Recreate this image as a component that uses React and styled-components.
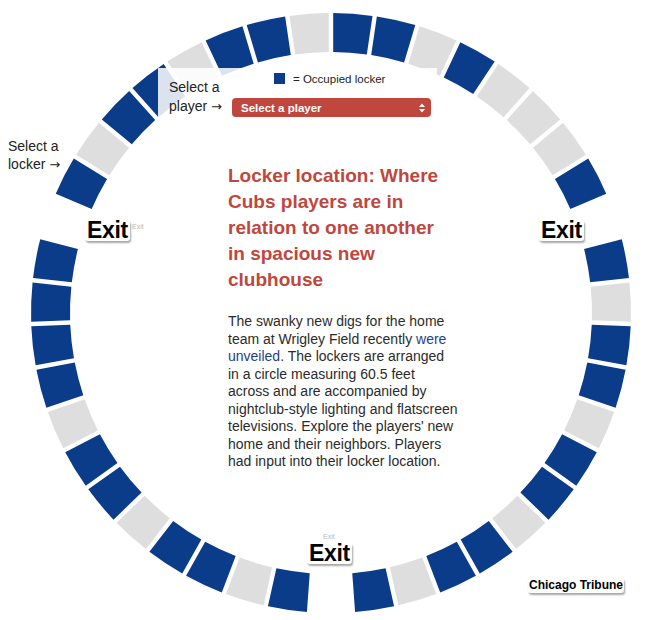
import React from "react";
import styled, { createGlobalStyle } from "styled-components";

const BLUE = "#0b3c8a";
const GREY = "#dedede";
const RED = "#bf473d";

const GlobalStyle = createGlobalStyle`
  html, body { margin: 0; padding: 0; background: #fff; }
  body {
    font-family: "Liberation Sans", Arial, Helvetica, sans-serif;
    color: #333;
  }
`;

// Locker slots clockwise from 12 o'clock. B = occupied, G = empty, X = exit opening.
const SLOTS =
  "BBGBGGGB" + "X" + "BGBBGBBGBBGB" + "X" + "BGBBGBBGBBBB" + "X" + "BGBBGBBG";

const CX = 331;
const CY = 313;
const R_OUT = 300;
const R_IN = 261;
const HALF_GAP = 2.2;
const STEP = (Math.PI * 2) / SLOTS.length;

function sectorPath(i) {
  const a0 = i * STEP;
  const a1 = (i + 1) * STEP;
  const pt = (r, a) =>
    `${(CX + r * Math.sin(a)).toFixed(2)} ${(CY - r * Math.cos(a)).toFixed(2)}`;
  const go = HALF_GAP / R_OUT;
  const gi = HALF_GAP / R_IN;
  return (
    `M${pt(R_OUT, a0 + go)} A${R_OUT} ${R_OUT} 0 0 1 ${pt(R_OUT, a1 - go)} ` +
    `L${pt(R_IN, a1 - gi)} A${R_IN} ${R_IN} 0 0 0 ${pt(R_IN, a0 + gi)}Z`
  );
}

const Stage = styled.div`
  position: relative;
  width: 659px;
  height: 620px;
  display: grid;
  grid-template-columns: 659px;
  grid-template-rows: 620px;
  overflow: hidden;
`;

const RingSvg = styled.svg`
  grid-area: 1 / 1;
  display: block;
`;

const Overlay = styled.div`
  grid-area: 1 / 1;
  display: flex;
  flex-direction: column;
  align-items: flex-start;
  padding: 68px 0 0 158px;
`;

const PlayerPanel = styled.div`
  display: flex;
  align-items: flex-end;
  padding: 5px 6px 3px 11px;
  background: rgba(255, 255, 255, 0.86);
`;

const HintLabel = styled.div`
  flex: 0 0 63px;
  font-size: 14px;
  line-height: 19px;
  color: #222;
  white-space: nowrap;
  margin-bottom: 1px;
`;

const Arrow = styled.span`
  font-family: "DejaVu Sans", sans-serif;
  font-size: 13px;
`;

const PickerColumn = styled.div`
  display: flex;
  flex-direction: column;
  align-items: flex-start;
  gap: 14px;
`;

const Legend = styled.div`
  display: flex;
  align-items: center;
  margin-left: 42px;
  height: 11px;
  font-size: 11.5px;
  color: #222;
  white-space: nowrap;
`;

const Swatch = styled.span`
  width: 11px;
  height: 11px;
  background: ${BLUE};
  margin-right: 8px;
`;

const PlayerSelect = styled.div`
  box-sizing: border-box;
  width: 199px;
  height: 19px;
  display: flex;
  align-items: center;
  justify-content: space-between;
  padding: 0 6px 0 9px;
  border-radius: 4px;
  background: ${RED};
  color: #fff;
  font-size: 11.5px;
  font-weight: bold;
`;

const Article = styled.div`
  margin: 43px 0 0 70px;
`;

const Title = styled.h1`
  margin: 0;
  font-size: 19px;
  line-height: 26px;
  font-weight: bold;
  color: ${RED};
  white-space: nowrap;
`;

const Body = styled.p`
  margin: 20px 0 0;
  font-size: 14px;
  line-height: 17.5px;
  color: #2b2b2b;
  white-space: nowrap;
`;

const Link = styled.span`
  color: #1f3f86;
`;

const LockerHint = styled.div`
  grid-area: 1 / 1;
  align-self: start;
  justify-self: start;
  margin: 137px 0 0 8px;
  font-size: 14px;
  line-height: 18px;
  color: #222;
`;

const Tag = styled.span`
  display: inline-block;
  background: #fff;
  color: #000;
  font-weight: bold;
  border-radius: 3px;
  box-shadow: 1px 2px 2px rgba(0, 0, 0, 0.35);
  white-space: nowrap;
`;

const ExitTag = styled(Tag)`
  position: absolute;
  left: ${(p) => p.$x}px;
  top: ${(p) => p.$y}px;
  font-size: 23px;
  line-height: 21px;
  padding: 0 2px;
  letter-spacing: -0.3px;
`;

const GhostExit = styled.span`
  position: absolute;
  left: ${(p) => p.$x}px;
  top: ${(p) => p.$y}px;
  font-size: 7px;
  line-height: 8px;
  color: #b8b8b8;
`;

const Credit = styled(Tag)`
  grid-area: 1 / 1;
  align-self: end;
  justify-self: end;
  margin: 0 35px 27px 0;
  font-size: 12px;
  line-height: 15px;
  padding: 0 1px;
`;

function Ring() {
  return (
    <RingSvg width="659" height="620" viewBox="0 0 659 620">
      {SLOTS.split("").map((s, i) =>
        s === "X" ? null : (
          <path key={i} d={sectorPath(i)} fill={s === "B" ? BLUE : GREY} />
        )
      )}
    </RingSvg>
  );
}

function SortArrows() {
  return (
    <svg width="6" height="10" viewBox="0 0 6 10">
      <path d="M0 4 L3 0.5 L6 4 Z M0 6 L3 9.5 L6 6 Z" fill="#fff" />
    </svg>
  );
}

export default function App() {
  return (
    <>
      <GlobalStyle />
      <Stage>
        <Ring />
        <Overlay>
          <PlayerPanel>
            <HintLabel>
              Select a
              <br />
              player <Arrow>→</Arrow>
            </HintLabel>
            <PickerColumn>
              <Legend>
                <Swatch />= Occupied locker
              </Legend>
              <PlayerSelect>
                <span>Select a player</span>
                <SortArrows />
              </PlayerSelect>
            </PickerColumn>
          </PlayerPanel>
          <Article>
            <Title>
              Locker location: Where
              <br />
              Cubs players are in
              <br />
              relation to one another
              <br />
              in spacious new
              <br />
              clubhouse
            </Title>
            <Body>
              The swanky new digs for the home
              <br />
              team at Wrigley Field recently <Link>were</Link>
              <br />
              <Link>unveiled</Link>. The lockers are arranged
              <br />
              in a circle measuring 60.5 feet
              <br />
              across and are accompanied by
              <br />
              nightclub-style lighting and flatscreen
              <br />
              televisions. Explore the players' new
              <br />
              home and their neighbors. Players
              <br />
              had input into their locker location.
            </Body>
          </Article>
        </Overlay>
        <LockerHint>
          Select a
          <br />
          locker <Arrow>→</Arrow>
        </LockerHint>
        <GhostExit $x={132} $y={223}>
          Exit
        </GhostExit>
        <GhostExit $x={323} $y={533}>
          Exit
        </GhostExit>
        <ExitTag $x={85} $y={220}>
          Exit
        </ExitTag>
        <ExitTag $x={539} $y={220}>
          Exit
        </ExitTag>
        <ExitTag $x={307} $y={543}>
          Exit
        </ExitTag>
        <Credit>Chicago Tribune</Credit>
      </Stage>
    </>
  );
}
